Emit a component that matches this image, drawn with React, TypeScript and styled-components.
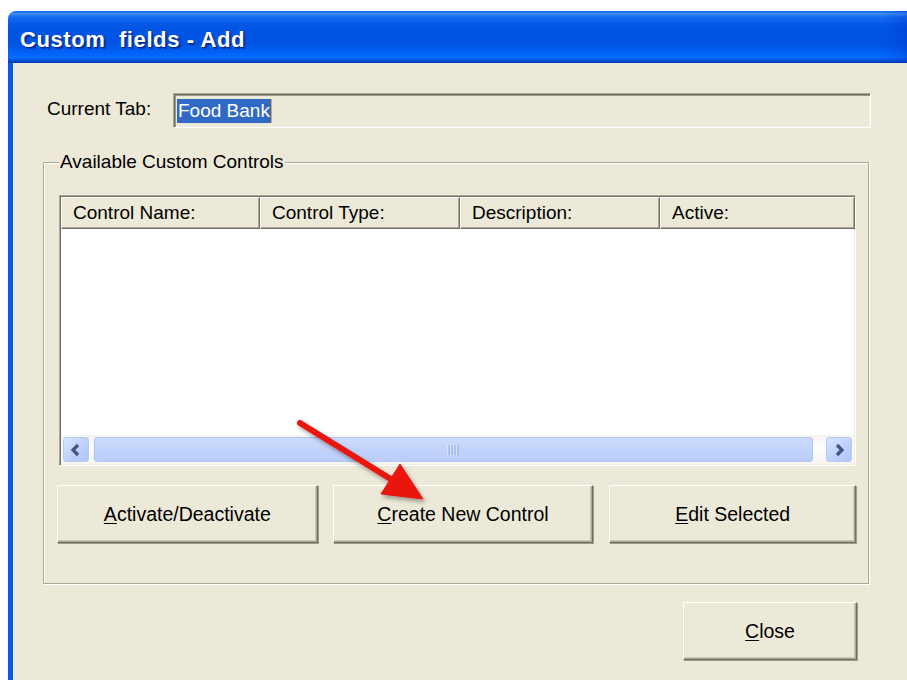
import React from 'react';
import styled, { createGlobalStyle } from 'styled-components';

const GlobalStyle = createGlobalStyle`
  html, body {
    margin: 0;
    padding: 0;
    background: #ffffff;
    overflow: hidden;
  }
  body {
    font-family: "Liberation Sans", Arial, sans-serif;
    color: #000;
  }
`;

const Window = styled.div`
  position: relative;
  margin: 11px 0 0 8px;
  width: 940px;
  height: 700px;
  display: flex;
  flex-direction: column;
  border-radius: 8px 8px 0 0;
  overflow: hidden;
`;

const TitleBar = styled.div`
  flex-shrink: 0;
  height: 52px;
  box-sizing: border-box;
  display: flex;
  align-items: center;
  padding: 6px 0 0 12px;
  background:
    linear-gradient(to right, rgba(0, 40, 180, 0) 93%, rgba(0, 40, 190, 0.45) 98%),
    linear-gradient(
      to bottom,
      #0a5fe4 0%,
      #3d8ef9 5%,
      #1568f0 12%,
      #0055e5 30%,
      #0053e1 62%,
      #0062f6 80%,
      #066bff 90%,
      #0047cc 97%,
      #003bb8 100%
    );
  color: #ffffff;
  font: bold 22px "Liberation Sans", Arial, sans-serif;
  letter-spacing: 0.6px;
  white-space: pre;
  text-shadow: 1px 1px 0 #0b2a8c, 2px 2px 1px rgba(0, 20, 110, 0.5);
`;

const Client = styled.div`
  flex: 1;
  background: #ece9d8;
  border-left: 5px solid #0857e6;
  padding: 30px 0 0 30px;
`;

const Column = styled.div`
  width: 828px;
  display: flex;
  flex-direction: column;
`;

const TabRow = styled.div`
  display: flex;
  align-items: center;
  padding-left: 4px;
  height: 35px;
`;

const Label = styled.span`
  width: 126px;
  font-size: 19px;
  margin-top: -4px;
`;

const ReadOnlyField = styled.div`
  flex: 1;
  height: 35px;
  box-sizing: border-box;
  display: flex;
  align-items: center;
  padding-left: 3px;
  background: #ece9d8;
  border-top: 1px solid #aca899;
  border-left: 1px solid #aca899;
  border-right: 1px solid #ffffff;
  border-bottom: 1px solid #ffffff;
  box-shadow: inset 1px 1px 0 #716f64, inset 2px 2px 0 #9d9a8c, inset -1px -1px 0 #f1efe2;
`;

const Selection = styled.span`
  background: #316ac5;
  color: #ffffff;
  font-size: 19px;
  line-height: 24px;
  padding: 0 1px;
  border-right: 1px solid #e8a64a;
`;

const GroupBox = styled.fieldset`
  margin: 23px 0 0;
  width: 826px;
  min-width: 0;
  box-sizing: border-box;
  padding: 22px 12px 40px 15px;
  border: 1px solid #aca899;
  box-shadow: inset 1px 1px 0 #ffffff, 1px 1px 0 #ffffff;
`;

const Legend = styled.legend`
  padding: 0 1px;
  font-size: 19px;
  line-height: 22px;
  background: #ece9d8;
`;

const ListView = styled.div`
  height: 271px;
  box-sizing: border-box;
  display: flex;
  flex-direction: column;
  background: #ffffff;
  border-top: 1px solid #aca899;
  border-left: 1px solid #aca899;
  border-right: 1px solid #ffffff;
  border-bottom: 1px solid #ffffff;
  box-shadow: inset 1px 1px 0 #716f64, inset -1px -1px 0 #f1efe2;
  padding: 1px;
`;

const HeaderRow = styled.div`
  flex-shrink: 0;
  display: flex;
  height: 32px;
  background: #ece9d8;
`;

const HeaderCell = styled.div<{ $width: number }>`
  width: ${({ $width }) => $width}px;
  flex-shrink: 0;
  box-sizing: border-box;
  display: flex;
  align-items: center;
  padding: 0 0 1px 11px;
  font-size: 19px;
  border-top: 1px solid #ffffff;
  border-left: 1px solid #ffffff;
  border-right: 1px solid #716f64;
  border-bottom: 1px solid #716f64;
  box-shadow: inset -1px -1px 0 #aca899;
`;

const HeaderFill = styled.div`
  flex: 1;
  border-top: 1px solid #ffffff;
  border-bottom: 1px solid #716f64;
  box-shadow: inset 0 -1px 0 #aca899;
`;

const ListBody = styled.div`
  flex: 1;
  background: #ffffff;
`;

const ScrollBar = styled.div`
  flex-shrink: 0;
  height: 29px;
  box-sizing: border-box;
  display: flex;
  align-items: center;
  padding: 0 2px;
  background: linear-gradient(to bottom, #f5f4ef, #fdfdfb 40%, #f6f5f0);
`;

const ScrollButton = styled.div`
  width: 26px;
  height: 25px;
  box-sizing: border-box;
  display: flex;
  align-items: center;
  justify-content: center;
  border: 1px solid #b6c8f4;
  border-radius: 3px;
  background: linear-gradient(to bottom right, #dbe5fe, #bccffa 60%, #b1c6f7);
`;

const Thumb = styled.div`
  width: 719px;
  height: 25px;
  margin-left: 5px;
  box-sizing: border-box;
  display: flex;
  align-items: center;
  justify-content: center;
  border: 1px solid #b0c4f4;
  border-radius: 3px;
  background: linear-gradient(to bottom, #cddbfd, #c1d3fb 50%, #b9cdf9);
`;

const TrackGap = styled.div`
  flex: 1;
`;

const ButtonRow = styled.div`
  display: flex;
  margin: 19px 0 0 -2px;
`;

const Button = styled.button<{ $width: number; $gap?: number }>`
  width: ${({ $width }) => $width}px;
  height: 58px;
  margin-left: ${({ $gap }) => $gap ?? 0}px;
  padding: 1px 0 0;
  font: 19.5px "Liberation Sans", Arial, sans-serif;
  color: #000;
  background: #ece9d8;
  border-top: 1px solid #ffffff;
  border-left: 1px solid #ffffff;
  border-right: 1px solid #716f64;
  border-bottom: 1px solid #716f64;
  box-shadow: inset -1px -1px 0 #aca899, inset -2px -2px 0 #cbc7b8, 1px 1px 0 #9d9a8c;
  u {
    text-decoration: underline;
    text-underline-offset: 2px;
  }
`;

const Footer = styled.div`
  display: flex;
  justify-content: flex-end;
  padding-right: 14px;
  margin-top: 18px;
`;

const Pointer = styled.svg`
  position: absolute;
  left: 280px;
  top: 400px;
  pointer-events: none;
  overflow: visible;
`;

const Chevron = ({ dir }: { dir: 'left' | 'right' }) => (
  <svg width="12" height="14" viewBox="0 0 12 14">
    <polyline
      points={dir === 'left' ? '8,2 3,7 8,12' : '4,2 9,7 4,12'}
      fill="none"
      stroke="#41557d"
      strokeWidth="3.2"
      strokeLinejoin="miter"
    />
  </svg>
);

const Grip = () => (
  <svg width="14" height="12" viewBox="0 0 14 12">
    {[1, 4, 7, 10].map((x) => (
      <g key={x}>
        <line x1={x} y1="1" x2={x} y2="11" stroke="#eef3ff" strokeWidth="1" />
        <line x1={x + 1} y1="1" x2={x + 1} y2="11" stroke="#8ca6dc" strokeWidth="1" />
      </g>
    ))}
  </svg>
);

const columns = [
  { name: 'Control Name:', width: 199 },
  { name: 'Control Type:', width: 200 },
  { name: 'Description:', width: 200 },
  { name: 'Active:', width: 195 },
];

export default function App() {
  return (
    <>
      <GlobalStyle />
      <Window>
        <TitleBar>{'Custom  fields - Add'}</TitleBar>
        <Client>
          <Column>
            <TabRow>
              <Label>Current Tab:</Label>
              <ReadOnlyField>
                <Selection>Food Bank</Selection>
              </ReadOnlyField>
            </TabRow>

            <GroupBox>
              <Legend>Available Custom Controls</Legend>
              <ListView>
                <HeaderRow>
                  {columns.map((c) => (
                    <HeaderCell key={c.name} $width={c.width}>
                      {c.name}
                    </HeaderCell>
                  ))}
                  <HeaderFill />
                </HeaderRow>
                <ListBody />
                <ScrollBar>
                  <ScrollButton>
                    <Chevron dir="left" />
                  </ScrollButton>
                  <Thumb>
                    <Grip />
                  </Thumb>
                  <TrackGap />
                  <ScrollButton>
                    <Chevron dir="right" />
                  </ScrollButton>
                </ScrollBar>
              </ListView>
              <ButtonRow>
                <Button $width={261}>
                  <u>A</u>ctivate/Deactivate
                </Button>
                <Button $width={261} $gap={15}>
                  <u>C</u>reate New Control
                </Button>
                <Button $width={247} $gap={16}>
                  <u>E</u>dit Selected
                </Button>
              </ButtonRow>
            </GroupBox>

            <Footer>
              <Button $width={174}>
                <u>C</u>lose
              </Button>
            </Footer>
          </Column>
        </Client>

        <Pointer width="160" height="110" viewBox="0 0 160 110">
          <defs>
            <filter id="arrowShade" x="-20%" y="-20%" width="140%" height="140%">
              <feDropShadow dx="2" dy="3" stdDeviation="2" floodColor="#000" floodOpacity="0.35" />
            </filter>
          </defs>
          <g filter="url(#arrowShade)" fill="#e8140e" stroke="#e8140e">
            <line x1="12" y1="12" x2="106" y2="70" strokeWidth="6" strokeLinecap="round" />
            <polygon points="112,53 135,88 93,83" strokeWidth="1" strokeLinejoin="round" />
          </g>
        </Pointer>
      </Window>
    </>
  );
}
